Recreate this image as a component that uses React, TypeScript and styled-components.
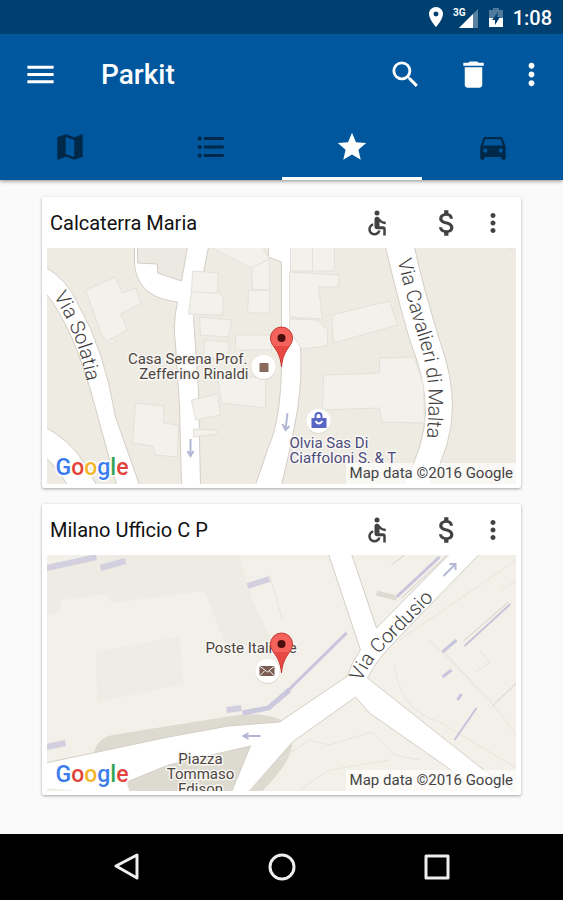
import React from 'react';
import styled, { createGlobalStyle } from 'styled-components';
import {
  MdAccessible,
  MdAttachMoney,
  MdDelete,
  MdDirectionsCar,
  MdFormatListBulleted,
  MdLocationOn,
  MdMap,
  MdMenu,
  MdMoreVert,
  MdSearch,
  MdStar,
} from 'react-icons/md';

const GlobalStyle = createGlobalStyle`
  *, *::before, *::after { box-sizing: border-box; }
  body {
    margin: 0;
    background: #fafafa;
    font-family: Roboto, "Liberation Sans", sans-serif;
  }
`;

const Screen = styled.div`
  display: flex;
  flex-direction: column;
  min-height: 100vh;
`;

const Header = styled.header`
  background: #00579d;
  color: #fff;
  box-shadow: 0 1px 4px rgba(0, 0, 0, 0.45);
`;

const StatusBar = styled.div`
  display: flex;
  align-items: center;
  justify-content: flex-end;
  height: 34px;
  padding-right: 11px;
  background: #004071;
`;

const Clock = styled.time`
  margin-left: 9px;
  padding-top: 2px;
  font-size: 20px;
  line-height: 24px;
  font-weight: 500;
`;

const SignalIcon = styled.svg`
  width: 28px;
  height: 22px;
  margin: 0 8px 0 4px;
`;

const BatteryIcon = styled.svg`
  width: 16px;
  height: 22px;
`;

const Toolbar = styled.div`
  display: flex;
  align-items: center;
  height: 81px;
  padding: 0 7px 0 16px;
`;

const IconButton = styled.button<{ $width: number }>`
  display: flex;
  flex: none;
  align-items: center;
  justify-content: center;
  width: ${(p) => p.$width}px;
  height: 48px;
  padding: 0;
  border: 0;
  background: none;
  color: inherit;
  cursor: pointer;
`;

const AppTitle = styled.h1`
  flex: 1;
  margin: 0 0 0 37px;
  font-size: 28px;
  line-height: 32px;
  font-weight: 500;
`;

const Tabs = styled.nav`
  display: grid;
  grid-template-columns: repeat(4, 1fr);
  height: 65px;
`;

const Tab = styled.button<{ $active?: boolean }>`
  display: flex;
  align-items: center;
  justify-content: center;
  padding: 2px 0 0;
  border: 0;
  border-bottom: 3px solid ${(p) => (p.$active ? '#fff' : 'transparent')};
  background: none;
  color: ${(p) => (p.$active ? '#fff' : 'rgba(0, 0, 0, 0.54)')};
  cursor: pointer;
`;

const CardList = styled.main`
  display: flex;
  flex: 1;
  flex-direction: column;
  gap: 16px;
  padding: 17px 42px 24px;
`;

const Card = styled.article`
  padding: 0 5px 4px;
  border-radius: 2px;
  background: #fff;
  box-shadow: 0 1px 3px rgba(0, 0, 0, 0.35);
`;

const CardHeader = styled.div`
  display: flex;
  align-items: center;
  height: 51px;
  color: #424242;
`;

const CardTitle = styled.h2`
  flex: 1;
  margin: 0;
  padding-left: 3px;
  color: #111;
  font-size: 20px;
  line-height: 24px;
  font-weight: 400;
`;

const Features = styled.div`
  display: flex;
  gap: 24px;
`;

const MapFrame = styled.div`
  position: relative;
  overflow: hidden;
`;

const MapDrawing = styled.svg`
  display: block;
  width: 100%;
  height: 236px;
`;

const Attribution = styled.small`
  position: absolute;
  right: 0;
  bottom: 0;
  padding: 0 3px 0 4px;
  background: rgba(255, 255, 255, 0.65);
  color: #444;
  font-family: Roboto, "Liberation Sans", sans-serif;
  font-size: 15px;
  line-height: 21px;
`;

const Label = styled.text<{ $ink?: string }>`
  fill: ${(p) => p.$ink ?? '#4d4541'};
  stroke: #f8f7f3;
  stroke-width: 3px;
  stroke-linejoin: round;
  paint-order: stroke;
  font-family: Roboto, sans-serif;
  font-size: 15px;
`;

const StreetName = styled.text`
  fill: #3c3c3c;
  font-family: Roboto, sans-serif;
  font-size: 20px;
  font-weight: 300;
`;

const LogoText = styled.text`
  stroke: #fff;
  stroke-width: 3px;
  stroke-linejoin: round;
  paint-order: stroke;
  font-family: Roboto, sans-serif;
  font-size: 23px;
  font-weight: 500;
`;

const NavBar = styled.footer`
  display: flex;
  justify-content: center;
  height: 66px;
  background: #000;
  color: #eee;
`;

const NavButton = styled.button`
  display: flex;
  align-items: center;
  justify-content: center;
  width: 155px;
  padding: 0;
  border: 0;
  background: none;
  color: inherit;
  cursor: pointer;
`;

function GoogleLogo({ x, y }: { x: number; y: number }) {
  return (
    <LogoText x={x} y={y}>
      <tspan fill="#3b7ded">G</tspan>
      <tspan fill="#e2433a">o</tspan>
      <tspan fill="#f4b52a">o</tspan>
      <tspan fill="#3b7ded">g</tspan>
      <tspan fill="#38a457">l</tspan>
      <tspan fill="#e2433a">e</tspan>
    </LogoText>
  );
}

function Pin({ x, y }: { x: number; y: number }) {
  return (
    <g transform={`translate(${x} ${y})`}>
      <path
        d="M0 0C-1-11-4-15-8-21C-10-24-11-26-11-29A11 11 0 0 1 11-29C11-26 10-24 8-21C4-15 1-11 0 0Z"
        fill="#f4625b"
        stroke="#c33a35"
      />
      <path d="M0-1C1-10 4-15 8-21L-8-21C-4-15-1-10 0-1Z" fill="#e03a33" opacity="0.6" />
      <circle cy="-29" r="4" fill="#4a0f0c" />
    </g>
  );
}

function ViaSolatiaMap() {
  return (
    <MapDrawing viewBox="47 248 470 236" preserveAspectRatio="xMidYMid slice" role="img" aria-label="Map of Calcaterra Maria">
      <rect x="47" y="248" width="470" height="236" fill="#eeebe3" />
      <g fill="#fff" stroke="#d3cfc6" strokeWidth="1">
        <path d="M46 267Q68 280 79 305Q105 350 116 417L140 485H117L91 390Q80 355 72 337Q60 310 46 293Z" />
        <path d="M46 427Q68 440 80 456L97 485H68Q60 470 46 457Z" />
        <path d="M135 247V264C137 288 153 299 178 302Q173 325 176 345L180 407L182 485H201L199 390L194 317L204 272L209 247Z" />
        <path d="M269 247V257L282 262V367Q281 420 269 447L256 485H282Q292 445 298 410Q303 375 301 345L291 330V247Z" />
        <path d="M386 247Q402 315 412 345Q426 380 426 413Q425 445 404 485H430Q453 445 453 407Q453 375 440 340Q423 285 415 247Z" />
      </g>
      <g fill="#f2f1eb" stroke="#e3e1da" strokeWidth="1">
        <path d="M138 247H188L182 281L158 273V264L138 263Z" fill="#ebe9e2" stroke="#d3cfc6" />
        <path d="M86 290L116 277L123 293L136 288L142 303L121 314L128 330L108 341L102 335Z" />
        <path d="M193 271L219 273L218 292L224 297L223 315L189 314L192 292Z" />
        <path d="M192 292L218 293" />
        <path d="M211 247H263L270 259L252 268L234 259Z" />
        <path d="M252 268L270 259V290H253ZM249 290H270V313H248Z" />
        <path d="M200 317L232 320L229 337L201 335ZM205 340L230 342L228 358H204Z" />
        <path d="M218 377H266V408L222 403Z" />
        <path d="M236 335H272V350H236Z" />
        <path d="M192 400L218 394L221 415L196 420ZM194 429L218 430L217 434L194 437Z" />
        <path d="M136 403L164 406V423L179 425L178 457L156 455L154 446L133 443Z" />
        <path d="M291 247H335V271H291ZM313 247V271" />
        <path d="M290 272L340 275L339 287H319L323 319L290 317Z" />
        <path d="M290 319L318 320L328 330V346L302 349L290 330Z" />
        <path d="M332 315L390 301L398 325L334 343Z" />
        <path d="M324 375L380 373V358L415 357L424 385L425 423L382 422L380 408L323 410Z" />
        <path d="M105 341Q111 345 117 341" />
        <path d="M509 249L517 252" />
      </g>
      <g fill="none" stroke="#b3b7d5" strokeWidth="2">
        <path d="M191 439V456M188 451L191 456L194 451M288 413L286 430M283 424L286 430L290 426" />
      </g>
      <path id="solatia-line" d="M54 296Q79 335 88 385" fill="none" />
      <StreetName>
        <textPath href="#solatia-line">Via Solatia</textPath>
      </StreetName>
      <path id="cavalieri-line" d="M398 260Q409 305 418 335Q430 372 429 405Q429 430 423 475" fill="none" />
      <StreetName>
        <textPath href="#cavalieri-line">Via Cavalieri di Malta</textPath>
      </StreetName>
      <Label x="248" y="364" textAnchor="end">Casa Serena Prof.</Label>
      <Label x="249" y="379" textAnchor="end">Zefferino Rinaldi</Label>
      <Label x="290" y="448" $ink="#4b4a7c">Olvia Sas Di</Label>
      <Label x="290" y="463" $ink="#4b4a7c">Ciaffoloni S. &amp; T</Label>
      <circle cx="264" cy="368" r="12" fill="#d9d6ce" />
      <circle cx="264" cy="367" r="12" fill="#fff" />
      <rect x="260" y="363" width="9" height="9" fill="#8b6a5e" />
      <circle cx="319" cy="422" r="12" fill="#d9d6ce" />
      <circle cx="319" cy="421" r="12" fill="#fff" />
      <path d="M312 418H327V428H312Z" fill="#5866c4" />
      <path d="M316 418V416A3 3 0 0 1 322 416V418" fill="none" stroke="#5866c4" strokeWidth="2" />
      <path d="M316 421Q319 426 323 421" fill="none" stroke="#fff" strokeWidth="2" />
      <Pin x={282} y={367} />
      <GoogleLogo x={56} y={475} />
    </MapDrawing>
  );
}

function CordusioMap() {
  return (
    <MapDrawing viewBox="47 555 470 236" preserveAspectRatio="xMidYMid slice" role="img" aria-label="Map of Milano Ufficio C P">
      <rect x="47" y="555" width="470" height="236" fill="#f2f0e8" />
      <path d="M47 570L100 555H240L252 598L272 640L228 650L205 591L112 603L108 594L62 600L60 612L47 616Z" fill="#eeebe4" />
      <path d="M96 652L180 636L184 684L98 702Z" fill="#efece5" />
      <g fill="#dddad0">
        <path d="M94 755Q97 738 113 735L226 717Q260 710 284 721L229 732L169 745Z" />
        <path d="M126 775L251 745L232 792H130Z" />
        <path d="M250 792L293 740Q294 760 262 792Z" />
      </g>
      <g fill="none" stroke="#e6e4dc" strokeWidth="1">
        <path d="M280 760L310 740L330 745L372 732L395 755L420 760M300 790L330 770L390 760" />
        <path d="M395 665Q400 710 440 722L517 768M430 640L490 700L517 735" />
        <path d="M443 650L480 690M480 650L490 663L475 672M517 580L502 590" />
        <path d="M400 640L517 560M270 575L283 620" />
      </g>
      <g fill="#fff" stroke="#d3cfc6" strokeWidth="1">
        <path d="M329 554L361 650Q352 662 348 676L280 722L229 726L169 737L46 763V787L80 784L120 785L169 765L251 746L232 792H249L293 742L356 697L370 713L450 769L482 792H515L483 769L368 678Q377 660 395 642L413 623L480 554H450L377 628L352 554Z" />
      </g>
      <path d="M47 765V788L90 792H130L124 775L169 762L250 745L150 744Z" fill="#fff" />
      <g fill="none" stroke="#d2d0de" strokeWidth="6">
        <path d="M47 568L97 557M101 568L126 561M248 586L270 579M47 747L66 743M227 710L242 708" />
      </g>
      <path d="M243 713L269 708L290 690" fill="none" stroke="#cbc9dd" strokeWidth="5" />
      <g fill="none" stroke="#c7c5de" strokeWidth="3">
        <path d="M286 693L347 633M397 597L440 557M443 652L457 640M443 677L452 670M458 700L462 694" />
      </g>
      <g fill="none" stroke="#c6c4da" strokeWidth="2">
        <path d="M465 646L511 604M455 740L477 708" />
      </g>
      <path d="M464 641L509 602M493 706L517 683M392 565L405 555M402 598L447 556" fill="none" stroke="#d3d0cb" strokeWidth="1" />
      <path d="M377 593L397 598" stroke="#dcdad3" strokeWidth="5" />
      <g fill="none" stroke="#b3b7d5" strokeWidth="2">
        <path d="M261 736H244M249 733L244 736L249 739M444 576L456 564M450 564H456V570" />
      </g>
      <path id="cordusio-line" d="M362 682Q370 662 388 645L446 587" fill="none" />
      <StreetName>
        <textPath href="#cordusio-line">Via Cordusio</textPath>
      </StreetName>
      <Label x="206" y="653">Poste Italiane</Label>
      <Label x="201" y="764" textAnchor="middle">Piazza</Label>
      <Label x="201" y="779" textAnchor="middle">Tommaso</Label>
      <Label x="201" y="794" textAnchor="middle">Edison</Label>
      <circle cx="268" cy="672" r="12" fill="#d9d6ce" />
      <circle cx="268" cy="671" r="12" fill="#fff" />
      <rect x="260" y="666" width="15" height="10" fill="#7c5c52" />
      <path d="M260 666L268 672L275 666M260 676L265 671M275 676L270 671" fill="none" stroke="#fff" strokeWidth="1" />
      <Pin x={282} y={673} />
      <GoogleLogo x={56} y={782} />
    </MapDrawing>
  );
}

interface PlaceProps {
  name: string;
  children: React.ReactNode;
}

function PlaceCard({ name, children }: PlaceProps) {
  return (
    <Card>
      <CardHeader>
        <CardTitle>{name}</CardTitle>
        <Features>
          <IconButton $width={46} aria-label="Accessible parking">
            <MdAccessible size={30} />
          </IconButton>
          <IconButton $width={46} aria-label="Paid parking">
            <MdAttachMoney size={34} />
          </IconButton>
        </Features>
        <IconButton $width={46} aria-label={`Options for ${name}`}>
          <MdMoreVert size={30} />
        </IconButton>
      </CardHeader>
      <MapFrame>
        {children}
        <Attribution>Map data ©2016 Google</Attribution>
      </MapFrame>
    </Card>
  );
}

export default function App() {
  return (
    <Screen>
      <GlobalStyle />
      <Header>
        <StatusBar>
          <MdLocationOn size={24} />
          <SignalIcon viewBox="0 0 28 22" aria-label="3G signal">
            <path d="M26 3V22H7Z" fill="#fff" opacity="0.35" />
            <path d="M21 8V22H7Z" fill="#fff" />
            <text x="1" y="10" fill="#fff" fontFamily="Roboto, sans-serif" fontSize="10" fontWeight="700">3G</text>
          </SignalIcon>
          <BatteryIcon viewBox="0 0 16 22" aria-label="Battery">
            <path d="M1 4H5V2H11V4H15V12H1Z" fill="#fff" opacity="0.3" />
            <path d="M1 12H15V21H1Z" fill="#fff" />
            <path d="M10 6L4 14H7V19L12 11H9Z" fill="#004071" />
          </BatteryIcon>
          <Clock>1:08</Clock>
        </StatusBar>
        <Toolbar>
          <IconButton $width={48} aria-label="Menu">
            <MdMenu size={35} />
          </IconButton>
          <AppTitle>Parkit</AppTitle>
          <IconButton $width={68} aria-label="Search">
            <MdSearch size={35} />
          </IconButton>
          <IconButton $width={68} aria-label="Delete">
            <MdDelete size={35} />
          </IconButton>
          <IconButton $width={49} aria-label="More options">
            <MdMoreVert size={35} />
          </IconButton>
        </Toolbar>
        <Tabs aria-label="Sections">
          <Tab aria-label="Map"><MdMap size={34} /></Tab>
          <Tab aria-label="List"><MdFormatListBulleted size={34} /></Tab>
          <Tab $active aria-current="page" aria-label="Favourites"><MdStar size={34} /></Tab>
          <Tab aria-label="My car"><MdDirectionsCar size={34} /></Tab>
        </Tabs>
      </Header>
      <CardList>
        <PlaceCard name="Calcaterra Maria">
          <ViaSolatiaMap />
        </PlaceCard>
        <PlaceCard name="Milano Ufficio C P">
          <CordusioMap />
        </PlaceCard>
      </CardList>
      <NavBar>
        <NavButton aria-label="Back">
          <svg width="28" height="28" viewBox="0 0 28 28" fill="none" stroke="currentColor" strokeWidth="3" strokeLinejoin="round">
            <path d="M24 2V25L3 13Z" />
          </svg>
        </NavButton>
        <NavButton aria-label="Home">
          <svg width="28" height="28" viewBox="0 0 28 28" fill="none" stroke="currentColor" strokeWidth="3">
            <circle cx="14" cy="14" r="12" />
          </svg>
        </NavButton>
        <NavButton aria-label="Recent apps">
          <svg width="28" height="28" viewBox="0 0 28 28" fill="none" stroke="currentColor" strokeWidth="3" strokeLinejoin="round">
            <path d="M3 3H25V25H3Z" />
          </svg>
        </NavButton>
      </NavBar>
    </Screen>
  );
}
